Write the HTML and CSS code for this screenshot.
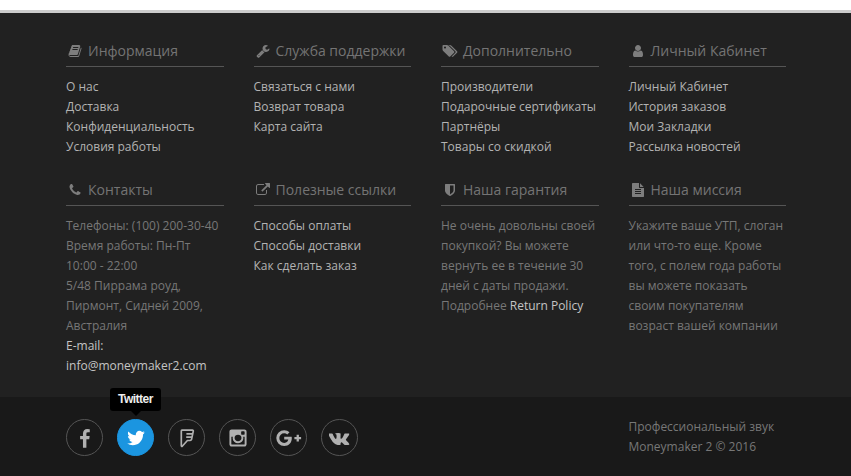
FILE: index.html
```html
<!DOCTYPE html>
<html lang="ru">
<head>
<meta charset="utf-8">
<title>Moneymaker 2</title>
<link rel="stylesheet" href="styles.css">
</head>
<body>
<footer>
  <div class="info">
    <section class="col">
      <h4><svg class="icon" viewBox="0 0 1792 1792"><path d="M1703 478q40 57 18 129l-275 906q-19 64-76.5 107.5t-122.5 43.5h-923q-77 0-148.5-53.5t-99.5-131.5q-24-67-2-127 0-4 3-27t4-37q1-8-3-21.5t-3-19.5q2-11 8-21t16.5-23.5 16.5-23.5q23-38 45-91.5t30-91.5q3-10 .5-30t-.5-28q3-11 17-28t17-23q21-36 42-92t25-90q1-9-2.5-32t.5-28q4-13 22-30.5t22-22.5q19-26 42.5-84.5t27.5-96.5q1-8-3-25.5t-2-26.5q2-8 9-18t18-23 17-21q8-12 16.5-30.5t15-35 16-36 19.5-32 26.5-23.5 36-11.5 47.5 5.5l-1 3q38-9 51-9h761q74 0 114 56t18 130l-274 906q-36 119-71.5 153.5t-128.5 34.5h-869q-27 0-38 15-11 16-1 43 24 70 144 70h923q29 0 56-15.5t35-41.5l300-987q7-22 5-57 38 15 59 43zm-1064 2q-4 13 2 22.5t20 9.5h608q13 0 25.5-9.5t16.5-22.5l21-64q4-13-2-22.5t-20-9.5h-608q-13 0-25.5 9.5t-16.5 22.5zm-83 256q-4 13 2 22.5t20 9.5h608q13 0 25.5-9.5t16.5-22.5l21-64q4-13-2-22.5t-20-9.5h-608q-13 0-25.5 9.5t-16.5 22.5z"/></svg>Информация</h4>
      <ul>
        <li><a>О нас</a></li>
        <li><a>Доставка</a></li>
        <li><a>Конфиденциальность</a></li>
        <li><a>Условия работы</a></li>
      </ul>
    </section>
    <section class="col">
      <h4><svg class="icon" viewBox="0 0 1792 1792"><path d="M448 1472q0-26-19-45t-45-19-45 19-19 45 19 45 45 19 45-19 19-45zm644-420l-682 682q-37 37-90 37-52 0-91-37l-106-108q-38-36-38-90 0-53 38-91l681-681q39 98 114.5 173.5t173.5 114.5zm634-435q0 39-23 106-47 134-164.5 217.5t-258.5 83.5q-185 0-316.5-131.5t-131.5-316.5 131.5-316.5 316.5-131.5q58 0 121.5 16.5t107.5 46.5q16 11 16 28t-16 28l-293 169v224l193 107q5-3 79-48.5t135.5-81 70.5-35.5q15 0 23.5 10t8.5 25z"/></svg>Служба поддержки</h4>
      <ul>
        <li><a>Связаться с нами</a></li>
        <li><a>Возврат товара</a></li>
        <li><a>Карта сайта</a></li>
      </ul>
    </section>
    <section class="col">
      <h4><svg class="icon" viewBox="0 0 1920 1792"><path d="M448 448q0-53-37.5-90.5t-90.5-37.5-90.5 37.5-37.5 90.5 37.5 90.5 90.5 37.5 90.5-37.5 37.5-90.5zm1067 576q0 53-37 90l-491 492q-39 37-91 37-53 0-90-37l-715-716q-38-37-64.5-101t-26.5-117v-416q0-52 38-90t90-38h416q53 0 117 26.5t102 64.5l715 714q37 39 37 91zm384 0q0 53-37 90l-491 492q-39 37-91 37-36 0-59-14t-53-45l470-470q37-37 37-90 0-52-37-91l-715-714q-38-38-102-64.5t-117-26.5h224q53 0 117 26.5t102 64.5l715 714q37 39 37 91z"/></svg>Дополнительно</h4>
      <ul>
        <li><a>Производители</a></li>
        <li><a>Подарочные сертификаты</a></li>
        <li><a>Партнёры</a></li>
        <li><a>Товары со скидкой</a></li>
      </ul>
    </section>
    <section class="col">
      <h4><svg class="icon" viewBox="0 0 1792 1792"><path d="M1536 1399q0 109-62.5 187t-150.5 78h-854q-88 0-150.5-78t-62.5-187q0-85 8.5-160.5t31.5-152 58.5-131 94-89 134.5-34.5q131 128 313 128t313-128q76 0 134.5 34.5t94 89 58.5 131 31.5 152 8.5 160.5zm-256-887q0 159-112.5 271.5t-271.5 112.5-271.5-112.5-112.5-271.5 112.5-271.5 271.5-112.5 271.5 112.5 112.5 271.5z"/></svg>Личный Кабинет</h4>
      <ul>
        <li><a>Личный Кабинет</a></li>
        <li><a>История заказов</a></li>
        <li><a>Мои Закладки</a></li>
        <li><a>Рассылка новостей</a></li>
      </ul>
    </section>
    <section class="col">
      <h4><svg class="icon" viewBox="0 0 1792 1792"><path d="M1600 1240q0 27-10 70.5t-21 68.5q-21 50-122 106-94 51-186 51-27 0-52.5-3.5t-57.5-12.5-47.5-14.5-55.5-20.5-49-18q-98-35-175-83-128-79-264.5-215.5t-215.5-264.5q-48-77-83-175-3-9-18-49t-20.5-55.5-14.5-47.5-12.5-57.5-3.5-52.5q0-92 51-186 56-101 106-122 25-11 68.5-21t70.5-10q14 0 21 3 18 6 53 76 11 19 30 54t35 63.5 31 53.5q3 4 17.5 25t21.5 35.5 7 28.5q0 20-28.5 50t-62 55-62 53-28.5 46q0 9 5 22.5t8.5 20.5 14 24 11.5 19q76 137 174 235t235 174q2 1 19 11.5t24 14 20.5 8.5 22.5 5q18 0 46-28.5t53-62 55-62 50-28.5q14 0 28.5 7t35.5 21.5 25 17.5q25 15 53.5 31t63.5 35 54 30q70 35 76 53 3 7 3 21z"/></svg>Контакты</h4>
      <p>Телефоны: (100) 200-30-40<br>Время работы: Пн-Пт<br>10:00 - 22:00<br>5/48 Пиррама роуд,<br>Пирмонт, Сидней 2009,<br>Австралия<br><a class="bright">E-mail:<br>info@moneymaker2.com</a></p>
    </section>
    <section class="col">
      <h4><svg class="icon" viewBox="0 0 1792 1792"><path d="M1408 928v320q0 119-84.5 203.5t-203.5 84.5h-832q-119 0-203.5-84.5t-84.5-203.5v-832q0-119 84.5-203.5t203.5-84.5h704q14 0 23 9t9 23v64q0 14-9 23t-23 9h-704q-66 0-113 47t-47 113v832q0 66 47 113t113 47h832q66 0 113-47t47-113v-320q0-14 9-23t23-9h64q14 0 23 9t9 23zm384-864v512q0 26-19 45t-45 19-45-19l-176-176-652 652q-10 10-23 10t-23-10l-114-114q-10-10-10-23t10-23l652-652-176-176q-19-19-19-45t19-45 45-19h512q26 0 45 19t19 45z"/></svg>Полезные ссылки</h4>
      <ul>
        <li><a>Способы оплаты</a></li>
        <li><a>Способы доставки</a></li>
        <li><a>Как сделать заказ</a></li>
      </ul>
    </section>
    <section class="col">
      <h4><svg class="icon" viewBox="0 0 1792 1792"><path d="M1344 960v-640h-448v1137q119-63 213-137 235-184 235-360zm192-768v768q0 86-33.5 170.5t-83 150-118 127.5-126.5 103-121 77.5-89.5 49.5-42.5 20q-12 6-26 6t-26-6q-16-7-42.5-20t-89.5-49.5-121-77.5-126.5-103-118-127.5-83-150-33.5-170.5v-768q0-26 19-45t45-19h1152q26 0 45 19t19 45z"/></svg>Наша гарантия</h4>
      <p>Не очень довольны своей<br>покупкой? Вы можете<br>вернуть ее в течение 30<br>дней с даты продажи.<br>Подробнее <a class="bright">Return Policy</a></p>
    </section>
    <section class="col">
      <h4><svg class="icon" viewBox="0 0 1792 1792"><path d="M1596 476q14 14 28 36h-472v-472q22 14 36 28zm-476 164h544v1056q0 40-28 68t-68 28h-1344q-40 0-68-28t-28-68v-1600q0-40 28-68t68-28h800v544q0 40 28 68t68 28zm160 736v-64q0-14-9-23t-23-9h-704q-14 0-23 9t-9 23v64q0 14 9 23t23 9h704q14 0 23-9t9-23zm0-256v-64q0-14-9-23t-23-9h-704q-14 0-23 9t-9 23v64q0 14 9 23t23 9h704q14 0 23-9t9-23zm0-256v-64q0-14-9-23t-23-9h-704q-14 0-23 9t-9 23v64q0 14 9 23t23 9h704q14 0 23-9t9-23z"/></svg>Наша миссия</h4>
      <p>Укажите ваше УТП, слоган<br>или что-то еще. Кроме<br>того, с полем года работы<br>вы можете показать<br>своим покупателям<br>возраст вашей компании</p>
    </section>
  </div>
  <div class="bottom">
    <nav class="social">
      <a class="round"><svg viewBox="0 0 1792 1792"><path d="M1343 12v264h-157q-86 0-116 36t-30 108v189h293l-39 296h-254v759h-306v-759h-255v-296h255v-218q0-186 104-288.500t277-102.500q147 0 228 12z" transform="translate(-20 100)"/></svg></a>
      <a class="round active"><span class="tip">Twitter</span><svg viewBox="0 0 1792 1792"><path d="M1684 408q-67 98-162 167 1 14 1 42 0 130-38 259.5t-115.5 248.5-184.5 210.5-258 146-323 54.5q-271 0-496-145 35 4 78 4 225 0 401-138-105-2-188-64.5t-114-159.5q33 5 61 5 43 0 85-11-112-23-185.5-111.5t-73.5-205.5v-4q68 38 146 41-66-44-105-115t-39-154q0-88 44-163 121 149 294.5 238.5t371.5 99.5q-8-38-8-74 0-134 94.5-228.5t228.5-94.5q140 0 236 102 109-21 205-78-37 115-142 178 93-10 186-50z"/></svg></a>
      <a class="round"><svg viewBox="0 0 20 20"><path class="line" d="M4.900 2.200H15.400Q16.500 2.200 16.300 3.200L14.500 11.600Q14.200 12.500 13.200 12.500H10.400L5.500 18Q4.300 19 4.300 17.600V2.900Q4.300 2.200 4.900 2.200ZM15.200 5.900H9.400M14.300 9.200H9.200"/></svg></a>
      <a class="round"><svg viewBox="0 0 1792 1792"><path d="M1490 1426v-648h-135q20 63 20 131 0 126-64 232.5t-174 168.5-240 62q-197 0-337-135.5t-140-327.5q0-68 20-131h-141v648q0 26 17.5 43.5t43.5 17.5h1069q25 0 43-17.5t18-43.5zm-284-533q0-124-90.5-211.5t-218.5-87.5q-127 0-217.5 87.5t-90.5 211.5 90.5 211.5 217.5 87.5q128 0 218.5-87.5t90.5-211.5zm284-360v-165q0-28-20-48.5t-49-20.5h-174q-29 0-49 20.5t-20 48.5v165q0 29 20 49t49 20h174q29 0 49-20t20-49zm174-208v1142q0 81-58 139t-139 58h-1142q-81 0-139-58t-58-139v-1142q0-81 58-139t139-58h1142q81 0 139 58t58 139z"/></svg></a>
      <a class="round"><svg class="wide" viewBox="0 0 26 20"><path d="M8.2 8.8H15.6Q15.8 9.5 15.8 10.3C15.8 14.8 12.8 18 8.2 18A7.9 7.9 0 0 1 8.2 2.2C10.3 2.2 12.1 3 13.5 4.2L11.3 6.4C10.5 5.6 9.4 5.2 8.2 5.2A4.9 4.9 0 0 0 8.2 15C11 15 12.1 13 12.3 11.6H8.2ZM20.6 6.7H22.9V8.9H25.1V11.2H22.9V13.4H20.6V11.2H18.4V8.9H20.6Z"/></svg></a>
      <a class="round"><svg class="vk" viewBox="0 0 1920 1792"><path d="M1853 520q23 64-150 294-24 32-65 85-78 100-90 131-17 41 14 81 17 21 81 82h1l1 1 1 1 2 2q141 131 191 221 3 5 6.500 12.500t7 26.500-.5 34-25 27.500-59 12.500l-256 4q-24 5-56-5t-52-22l-20-12q-30-21-70-64t-68.500-77.500-61-58-56.500-15.500q-3 1-8 3.500t-17 14.500-21.500 29.500-17 52-6.500 77.500q0 15-3.500 27.500t-7.500 18.500l-4 5q-18 19-53 22h-115q-71 4-146-16.500t-131.500-53-103-66-70.500-57.500l-25-24q-10-10-27.500-30t-71.500-91-106-151-122.500-211-130.500-272q-6-16-6-27t3-16l4-6q15-19 57-19l274-2q12 2 23 6.500t16 8.500l5 3q16 11 24 32 20 50 46 103.500t41 81.500l16 29q29 60 56 104t48.500 68.500 41.500 38.500 34 14 27-5q2-1 5-5t12-22 13.500-47 9.500-81 0-125q-2-40-9-73t-14-46l-6-12q-25-34-85-43-13-2 5-24 16-19 38-30 53-26 239-24 82 1 135 13 20 5 33.500 13.500t20.500 24 10.500 32 3.500 45.500-1 55-2.500 70.500-1.500 82.500q0 11-1 42t-.5 48 3.500 40.500 11.500 39 22.500 24.500q8 2 17 4t26-11 38-34.500 52-67 68-107.500q60-104 107-225 4-10 10-17.500t11-10.500l4-3 5-2.500 13-3 20-.5 288-2q39-5 64 2.500t31 16.500z"/></svg></a>
    </nav>
    <p class="copy">Профессиональный звук<br>Moneymaker 2 © 2016</p>
  </div>
</footer>
</body>
</html>
```
FILE: styles.css
```css
* { box-sizing: border-box; }
body {
  margin: 0;
  padding-top: 10px;
  background: #fff;
  color: #777;
  font: 12px/20px "Open Sans", sans-serif;
  overflow: hidden;
}
footer { border-top: 3px solid #ccc; background: #212121; }
h4, p, ul { margin: 0; padding: 0; }
ul { list-style: none; }
a { color: #b3b3b3; }
.bright { color: #c4c4c4; }
.info, .bottom {
  display: grid;
  grid-template-columns: repeat(4, 157.5px);
  column-gap: 30px;
  padding-left: 66px;
}
.info {
  row-gap: 23px;
  height: 384px;
  padding-top: 28px;
  align-content: start;
}
.col { white-space: nowrap; }
h4 {
  display: flex;
  align-items: center;
  gap: 4px;
  height: 26px;
  padding-bottom: 6px;
  margin-bottom: 10px;
  border-bottom: 1px solid #555;
  font-size: 14px;
  font-weight: 400;
  line-height: 20px;
  color: #747474;
}
.icon { width: 18px; height: 14px; flex: none; fill: #7d7d7d; }
.bottom { height: 79px; background: #191919; }
.social {
  grid-column: 1 / 4;
  display: flex;
  gap: 14px;
  padding-top: 22px;
}
.round {
  position: relative;
  display: flex;
  align-items: center;
  justify-content: center;
  width: 37px;
  height: 37px;
  border: 1px solid #555;
  border-radius: 50%;
}
.round svg { width: 20px; height: 20px; fill: #b0b0b0; }
.round .wide { width: 26px; }
.round .vk { width: 21px; }
.round .line { fill: none; stroke: #b0b0b0; stroke-width: 1.7; }
.active { background: #1b95e0; border-color: #1b95e0; }
.round.active svg { fill: #fff; }
.tip {
  position: absolute;
  left: -8px;
  bottom: 44px;
  width: 51px;
  height: 23px;
  border-radius: 3px;
  background: #000;
  color: #eee;
  font: bold 12px/22px "Liberation Sans", sans-serif;
  letter-spacing: -0.5px;
  text-align: center;
}
.tip::after {
  content: "";
  position: absolute;
  left: 20.5px;
  top: 23px;
  border: 5px solid transparent;
  border-top-color: #000;
  border-bottom: 0;
}
.copy { grid-column: 4; padding-top: 20px; white-space: nowrap; }
```
